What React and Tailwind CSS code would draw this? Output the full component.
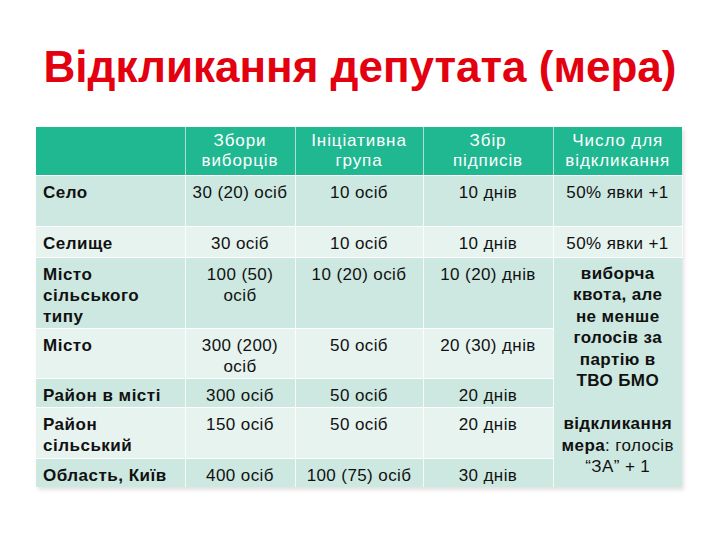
import React from 'react';

const head = [
  ['Збори', 'виборців'],
  ['Ініціативна', 'група'],
  ['Збір', 'підписів'],
  ['Число для', 'відкликання'],
];

const rows = [
  { name: ['Село'], h: 'h-[51px]', dark: true, cells: ['30 (20) осіб', '10 осіб', '10 днів', '50% явки +1'] },
  { name: ['Селище'], h: 'h-[31px]', dark: false, cells: ['30 осіб', '10 осіб', '10 днів', '50% явки +1'] },
  { name: ['Місто', 'сільського', 'типу'], h: 'h-[71px]', dark: true, cells: ['100 (50) осіб', '10 (20) осіб', '10 (20) днів'] },
  { name: ['Місто'], h: 'h-[50px]', dark: false, cells: ['300 (200) осіб', '50 осіб', '20 (30) днів'] },
  { name: ['Район в місті'], h: 'h-[29px]', dark: true, cells: ['300 осіб', '50 осіб', '20 днів'] },
  { name: ['Район', 'сільський'], h: 'h-[51px]', dark: false, cells: ['150 осіб', '50 осіб', '20 днів'] },
  { name: ['Область, Київ'], h: 'h-[29px]', dark: true, cells: ['400 осіб', '100 (75) осіб', '30 днів'] },
];

const quota = ['виборча', 'квота, але', 'не менше', 'голосів за', 'партію в', 'ТВО БМО'];

const App = () => {
  return (
    <div className="w-[720px] h-[540px] bg-white font-['Liberation_Sans',Arial,sans-serif] text-[#111]">
      <h1 className="pt-[45px] text-center text-[44px] leading-[44px] font-bold text-[#e3000f]">
        Відкликання депутата (мера)
      </h1>

      <div className="mt-[38px] ml-[36px] w-[646px] shadow-[2px_3px_4px_rgba(0,0,0,0.12)]">
        <table className="w-full table-fixed border-collapse text-[17px] leading-[21px]">
          <colgroup>
            <col className="w-[149px]" />
            <col className="w-[110px]" />
            <col className="w-[128px]" />
            <col className="w-[130px]" />
            <col className="w-[129px]" />
          </colgroup>
          <thead>
            <tr className="h-[48px] bg-[#1fb891] text-white">
              <th className="border-r border-white/60" />
              {head.map((t, i) => (
                <th
                  key={t[0]}
                  className={`px-0 pt-[4px] align-top text-center text-[17px] font-normal leading-[20px] tracking-[0.9px] ${i < 3 ? 'border-r border-white/60' : ''}`}
                >
                  {t[0]}
                  <br />
                  {t[1]}
                </th>
              ))}
            </tr>
          </thead>
          <tbody>
            {rows.map((r, ri) => (
              <tr key={r.name.join(' ')} className={`${r.h} border-t border-white ${r.dark ? 'bg-[#cde8e0]' : 'bg-[#e7f3ef]'}`}>
                <td className="border-r border-white/80 px-[7px] pt-[6px] align-top font-bold tracking-[0.5px]">
                  {r.name.map((n, ni) => (
                    <div key={ni}>{n}</div>
                  ))}
                </td>
                {r.cells.map((c, ci) => (
                  <td key={ci} className="border-r border-white/80 px-1 pt-[6px] align-top text-center tracking-[0.4px]">
                    {c}
                  </td>
                ))}
                {ri === 2 && (
                  <td rowSpan={5} className="bg-[#cde8e0] px-1 pt-[5px] align-top text-center text-[17px] leading-[21.5px] tracking-[0.4px]">
                    {quota.map((q) => (
                      <div key={q} className="font-bold">{q}</div>
                    ))}
                    <div className="h-[21.5px]" />
                    <div className="font-bold">відкликання</div>
                    <div>
                      <span className="font-bold">мера</span>: голосів
                    </div>
                    <div>“ЗА” + 1</div>
                  </td>
                )}
              </tr>
            ))}
          </tbody>
        </table>
      </div>
    </div>
  );
};

export default App;
